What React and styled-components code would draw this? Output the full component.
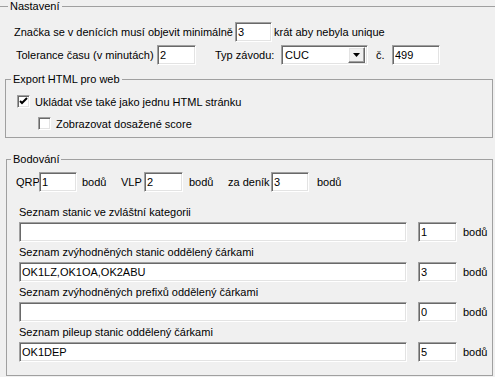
import React from 'react';
import styled, { createGlobalStyle } from 'styled-components';

const Global = createGlobalStyle`
  html, body {
    margin: 0;
    background: #f0f0f0;
  }
  body {
    font-family: "Liberation Sans", Arial, sans-serif;
    font-size: 11px;
    color: #000;
    overflow: hidden;
  }
`;

const Window = styled.div`
  width: 495px;
  height: 377px;
  overflow: hidden;
`;

const Group = styled.fieldset`
  margin: ${(p) => p.$margin};
  padding: 0 0 ${(p) => p.$pb || 0}px 0;
  border: 1px solid #a0a0a0;
  ${(p) => p.$open && 'border-bottom: none;'}
  min-width: 0;
`;

const Legend = styled.legend`
  margin-left: ${(p) => p.$offset}px;
  padding: 0 2px;
  height: 13px;
  line-height: 13px;
`;

const Row = styled.div`
  display: flex;
  align-items: center;
  height: ${(p) => p.$h || 20}px;
  margin-top: ${(p) => p.$mt || 0}px;
  padding-left: ${(p) => p.$pl || 0}px;
`;

const Text = styled.span`
  flex: none;
  width: ${(p) => (p.$w ? `${p.$w}px` : 'auto')};
  margin-left: ${(p) => p.$ml || 0}px;
  white-space: nowrap;
`;

const Input = styled.input`
  flex: none;
  box-sizing: border-box;
  width: ${(p) => p.$w}px;
  height: 20px;
  margin: 0 0 0 ${(p) => p.$ml || 0}px;
  padding: 0 2px;
  font: inherit;
  color: #000;
  background: #fff;
  border: 1px solid;
  border-color: #a0a0a0 #fff #fff #a0a0a0;
  box-shadow: inset 1px 1px 0 #696969, inset -1px -1px 0 #e3e3e3;
  outline: none;
`;

const Select = styled.div`
  flex: none;
  box-sizing: border-box;
  display: flex;
  align-items: center;
  justify-content: space-between;
  width: ${(p) => p.$w}px;
  height: 20px;
  padding: 2px 2px 2px 3px;
  background: #fff;
  border: 1px solid;
  border-color: #a0a0a0 #fff #fff #a0a0a0;
  box-shadow: inset 1px 1px 0 #696969, inset -1px -1px 0 #e3e3e3;
`;

const DropButton = styled.span`
  box-sizing: border-box;
  display: flex;
  align-items: center;
  justify-content: center;
  width: 17px;
  height: 16px;
  background: #f0f0f0;
  border: 1px solid;
  border-color: #fff #696969 #696969 #fff;
  box-shadow: inset -1px -1px 0 #a0a0a0, inset 1px 1px 0 #e3e3e3;
`;

const Check = styled.span`
  flex: none;
  box-sizing: border-box;
  display: flex;
  align-items: center;
  justify-content: center;
  width: 13px;
  height: 13px;
  background: #fff;
  border: 1px solid;
  border-color: #a0a0a0 #fff #fff #a0a0a0;
  box-shadow: inset 1px 1px 0 #696969, inset -1px -1px 0 #e3e3e3;
`;

const Body = styled.div`
  padding-bottom: ${(p) => p.$pb || 0}px;
`;

const ListBlock = styled.div`
  margin-top: ${(p) => p.$mt || 0}px;
  padding-left: 12px;
`;

const ListItem = styled.div`
  margin-bottom: 3px;
`;

const ListLabel = styled.div`
  height: 14px;
  line-height: 14px;
  white-space: nowrap;
`;

const Checkbox = ({ checked }) => (
  <Check>
    {checked && (
      <svg width="9" height="9" viewBox="0 0 9 9">
        <path d="M1 4 L3 6 L8 1" fill="none" stroke="#000" strokeWidth="2" />
      </svg>
    )}
  </Check>
);

const lists = [
  { label: 'Seznam stanic ve zvláštní kategorii', value: '', points: '1' },
  { label: 'Seznam zvýhodněných stanic oddělený čárkami', value: 'OK1LZ,OK1OA,OK2ABU', points: '3' },
  { label: 'Seznam zvýhodněných prefixů oddělený čárkami', value: '', points: '0' },
  { label: 'Seznam pileup stanic oddělený čárkami', value: 'OK1DEP', points: '5' },
];

export default function App() {
  return (
    <Window>
      <Global />
      <Group $margin="0 -3px" $open>
        <Legend $offset={10}>Nastavení</Legend>
        <Row $mt={9} $pl={16}>
          <Text $w={221}>Značka se v denících musí objevit minimálně</Text>
          <Input $w={37} defaultValue="3" />
          <Text $ml={2}>krát aby nebyla unique</Text>
        </Row>
        <Row $mt={3} $pl={18}>
          <Text $w={141}>Tolerance času (v minutách)</Text>
          <Input $w={39} defaultValue="2" />
          <Text $ml={19} $w={66}>Typ závodu:</Text>
          <Select $w={87}>
            <span>CUC</span>
            <DropButton>
              <svg width="7" height="4" viewBox="0 0 7 4">
                <path d="M0 0 H7 L3.5 4 Z" fill="#000" />
              </svg>
            </DropButton>
          </Select>
          <Text $ml={8} $w={16}>č.</Text>
          <Input $w={48} defaultValue="499" />
        </Row>
        <Group $margin="8px 4px 0 7px">
          <Legend $offset={5}>Export HTML pro web</Legend>
          <Body $pb={7}>
            <Row $h={13} $mt={9} $pl={11}>
              <Checkbox checked />
              <Text $ml={5}>Ukládat vše také jako jednu HTML stránku</Text>
            </Row>
            <Row $h={13} $mt={9} $pl={32}>
              <Checkbox />
              <Text $ml={5}>Zobrazovat dosažené score</Text>
            </Row>
          </Body>
        </Group>
      </Group>
      <Group $margin="15px 2px 0 6px" $pb={10}>
        <Legend $offset={4}>Bodování</Legend>
        <Row $mt={6} $pl={9}>
          <Text $w={23}>QRP</Text>
          <Input $w={38} defaultValue="1" />
          <Text $ml={5} $w={39}>bodů</Text>
          <Text $w={23}>VLP</Text>
          <Input $w={39} defaultValue="2" />
          <Text $ml={6} $w={39}>bodů</Text>
          <Text $w={43}>za deník</Text>
          <Input $w={38} defaultValue="3" />
          <Text $ml={8}>bodů</Text>
        </Row>
        <ListBlock $mt={13}>
          {lists.map((item) => (
            <ListItem key={item.label}>
              <ListLabel>{item.label}</ListLabel>
              <Row $mt={3}>
                <Input $w={388} defaultValue={item.value} />
                <Input $w={39} $ml={11} defaultValue={item.points} />
                <Text $ml={6}>bodů</Text>
              </Row>
            </ListItem>
          ))}
        </ListBlock>
      </Group>
    </Window>
  );
}
